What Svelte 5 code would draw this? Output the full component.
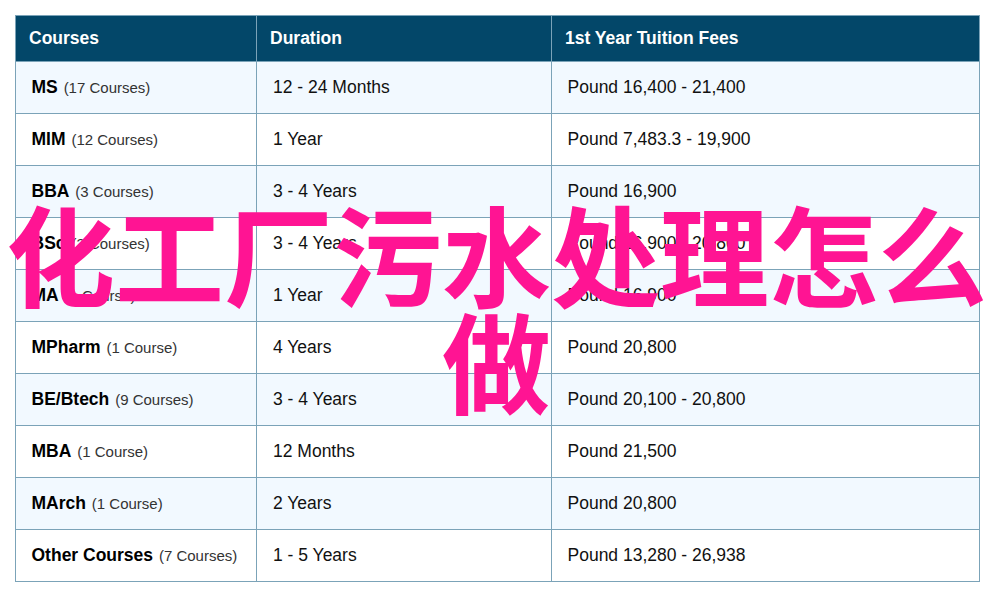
<script>
	const rows = [
		['MS', '(17 Courses)', '12 - 24 Months', 'Pound 16,400 - 21,400'],
		['MIM', '(12 Courses)', '1 Year', 'Pound 7,483.3 - 19,900'],
		['BBA', '(3 Courses)', '3 - 4 Years', 'Pound 16,900'],
		['BSc', '(3 Courses)', '3 - 4 Years', 'Pound 16,900 - 20,800'],
		['MA', '(1 Course)', '1 Year', 'Pound 16,900'],
		['MPharm', '(1 Course)', '4 Years', 'Pound 20,800'],
		['BE/Btech', '(9 Courses)', '3 - 4 Years', 'Pound 20,100 - 20,800'],
		['MBA', '(1 Course)', '12 Months', 'Pound 21,500'],
		['MArch', '(1 Course)', '2 Years', 'Pound 20,800'],
		['Other Courses', '(7 Courses)', '1 - 5 Years', 'Pound 13,280 - 26,938']
	];
</script>

<div class="page">
	<table>
		<thead>
			<tr>
				<th class="col1">Courses</th>
				<th class="col2">Duration</th>
				<th>1st Year Tuition Fees</th>
			</tr>
		</thead>
		<tbody>
			{#each rows as row}
			<tr>
				<td class="name"><strong>{row[0]}</strong> <span class="count">{row[1]}</span></td>
				<td>{row[2]}</td>
				<td class="fee">{row[3]}</td>
			</tr>
			{/each}
		</tbody>
	</table>

	<h1>化工厂污水处理怎么做</h1>
</div>

<style>
	:global(body) {
		background: #fff;
	}

	.page {
		position: relative;
		width: 991px;
		height: 597px;
		padding: 15px 11px 0 15px;
		box-sizing: border-box;
		overflow: hidden;
		font-family: "Liberation Sans", Arial, sans-serif;
	}

	table {
		width: 965px;
		border-collapse: collapse;
		table-layout: fixed;
		border: 1px solid #7ba3b8;
	}

	.col1 {
		width: 241px;
	}

	.col2 {
		width: 295px;
	}

	th {
		height: 46px;
		padding: 0 13px;
		box-sizing: border-box;
		background: #034769;
		color: #fff;
		font-size: 17.5px;
		font-weight: bold;
		text-align: left;
		border: 1px solid #7ba3b8;
	}

	td {
		height: 52px;
		padding: 0 16px;
		box-sizing: border-box;
		font-size: 17.5px;
		color: #111;
		border: 1px solid #7ba3b8;
	}

	td.name, td.fee {
		padding-left: 15.5px;
	}

	tbody tr:nth-child(odd) td {
		background: #f2f9ff;
	}

	strong {
		color: #000;
		margin-right: 1px;
	}

	.count {
		font-size: 15px;
		color: #333;
	}

	h1 {
		position: absolute;
		top: 198px;
		left: 0;
		right: 0;
		margin: 0;
		padding: 0 4px 0 6px;
		font-family: "Noto Sans CJK SC", sans-serif;
		font-size: 109px;
		font-weight: 700;
		line-height: 107px;
		color: #ff1493;
		text-align: center;
	}
</style>
